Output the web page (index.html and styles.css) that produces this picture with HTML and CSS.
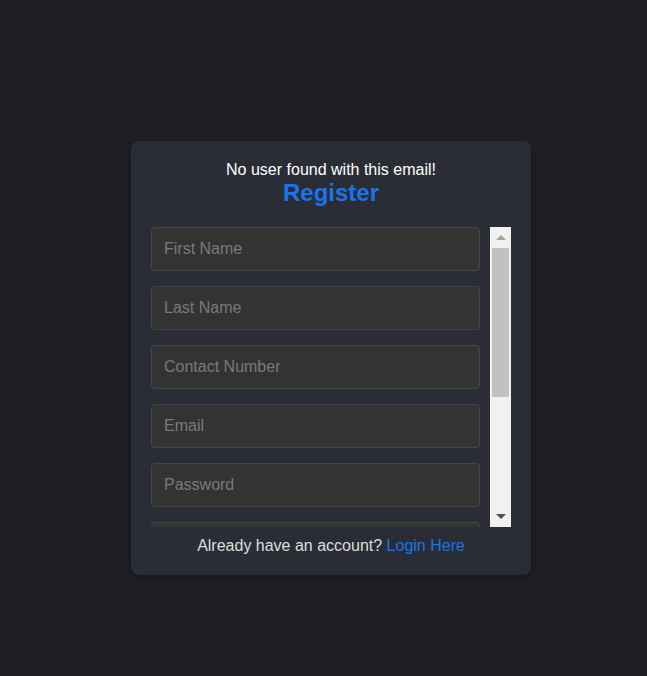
FILE: index.html
```html
<!DOCTYPE html>
<html lang="en">
<head>
<meta charset="utf-8">
<title>Register</title>
<link rel="stylesheet" href="styles.css">
</head>
<body>
<main class="page">
  <section class="card">
    <p class="notice">No user found with this email!</p>
    <h2 class="title">Register</h2>
    <div class="scroller">
      <form class="form">
        <input class="field" type="text" placeholder="First Name">
        <input class="field" type="text" placeholder="Last Name">
        <input class="field" type="text" placeholder="Contact Number">
        <input class="field" type="email" placeholder="Email">
        <input class="field" type="password" placeholder="Password">
        <input class="field" type="password" placeholder="Confirm Password">
      </form>
      <div class="scrollbar" aria-hidden="true">
        <span class="sb-btn"><span class="arrow-up"></span></span>
        <span class="sb-track"><span class="sb-thumb"></span></span>
        <span class="sb-btn"><span class="arrow-down"></span></span>
      </div>
    </div>
    <p class="footer">Already have an account? <a class="link" href="#">Login Here</a></p>
  </section>
</main>
</body>
</html>
```
FILE: styles.css
```css
html, body {
  margin: 0;
  padding: 0;
  background: #1f2023;
  font-family: "Liberation Sans", Arial, sans-serif;
}

.page {
  padding: 141px 0 0 131px;
  height: 535px;
  overflow: hidden;
}

.card {
  width: 360px;
  padding: 20px 20px 20px;
  background: #2a2d35;
  border-radius: 8px;
  box-shadow: 0 2px 8px rgba(0, 0, 0, 0.35);
  text-align: center;
}

.notice {
  margin: 0;
  font-size: 16px;
  line-height: 18px;
  color: #ffffff;
}

.title {
  margin: 0 0 20px;
  font-size: 24px;
  line-height: 28px;
  font-weight: bold;
  color: #1b74ec;
}

.scroller {
  display: flex;
  gap: 10px;
  height: 300px;
}

.form {
  flex: 1;
  overflow: hidden;
  display: flex;
  flex-direction: column;
  gap: 15px;
  text-align: left;
  margin: 0;
}

.field {
  flex: none;
  box-sizing: border-box;
  width: 100%;
  height: 44px;
  margin: 0;
  padding: 0 12px;
  background: #333333;
  border: 1px solid #474747;
  border-radius: 4px;
  color: #eeeeee;
  font-family: "Liberation Sans", Arial, sans-serif;
  font-size: 16px;
  outline: none;
}

.field::placeholder {
  color: #7a7a7a;
}

.scrollbar {
  width: 21px;
  flex: none;
  display: flex;
  flex-direction: column;
  background: #f1f1f1;
}

.sb-btn {
  height: 21px;
  flex: none;
  display: flex;
  align-items: center;
  justify-content: center;
}

.arrow-up {
  width: 0;
  height: 0;
  border-left: 5px solid transparent;
  border-right: 5px solid transparent;
  border-bottom: 5px solid #a3a3a3;
}

.arrow-down {
  width: 0;
  height: 0;
  border-left: 5px solid transparent;
  border-right: 5px solid transparent;
  border-top: 5px solid #505050;
}

.sb-track {
  flex: 1;
  padding: 0 2px;
}

.sb-thumb {
  display: block;
  height: 149px;
  background: #c1c1c1;
}

.footer {
  margin: 10px 0 0;
  font-size: 16px;
  line-height: 18px;
  color: #dddddd;
}

.link {
  color: #1b74ec;
  text-decoration: none;
}
```
